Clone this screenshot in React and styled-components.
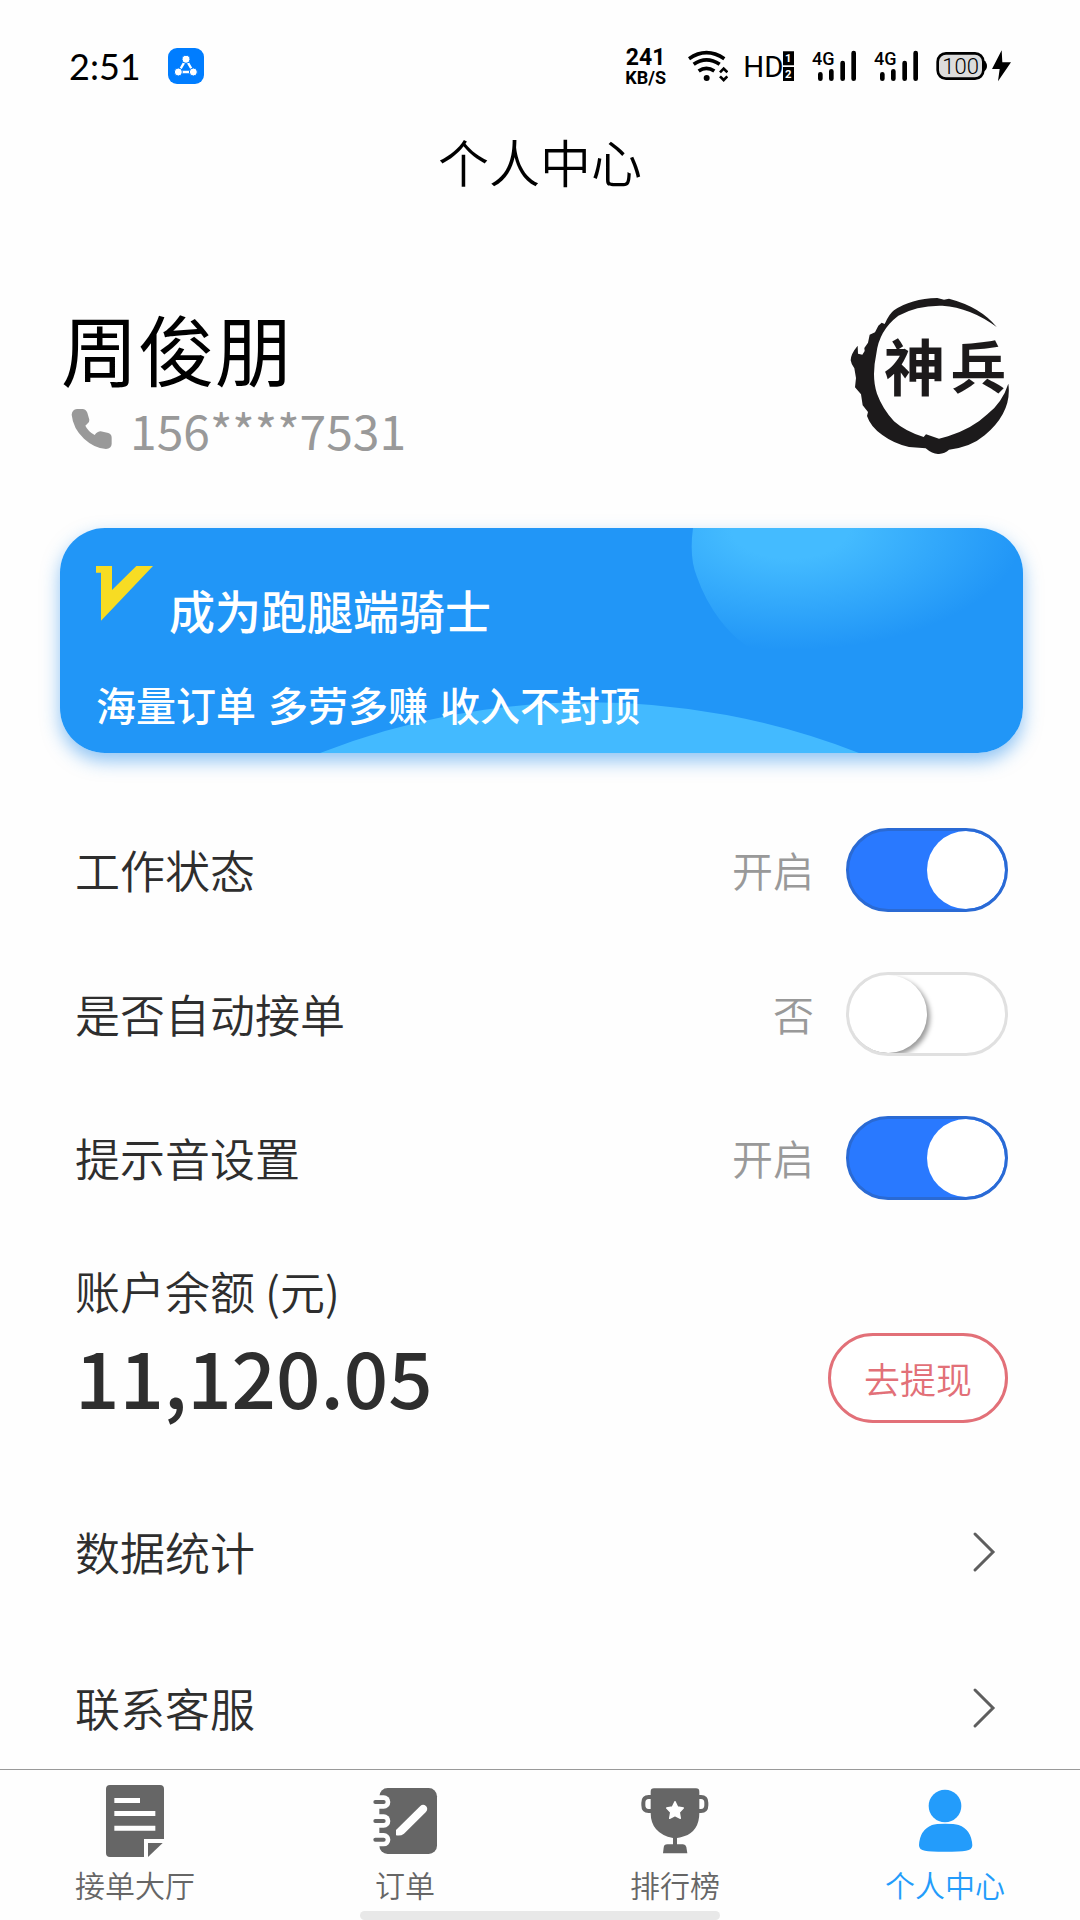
import React, { useState } from 'react';
import styled, { createGlobalStyle } from 'styled-components';

const GlobalStyle = createGlobalStyle`
  * {
    box-sizing: border-box;
  }
  body {
    margin: 0;
    background-color: #fefefe;
    color: #2e2e2e;
    font-family: 'Noto Sans CJK SC', 'Noto Sans', sans-serif;
    font-weight: 350;
  }
  h1, h2, p, ul {
    margin: 0;
    padding: 0;
    font-weight: inherit;
  }
  a {
    color: inherit;
    text-decoration: none;
  }
  svg {
    display: block;
    flex-shrink: 0;
  }
`;

const Page = styled.div`
  display: flex;
  flex-direction: column;
  min-height: 100vh;
`;

const StatusBar = styled.div`
  display: flex;
  align-items: center;
  justify-content: space-between;
  height: 132px;
  padding: 0 69px;
  color: #000;
`;

const StatusGroup = styled.div`
  display: flex;
  align-items: center;
  gap: ${({ $gap }) => $gap}px;
`;

const Clock = styled.time`
  font-family: Lato, sans-serif;
  font-size: 36px;
  font-weight: 400;
  line-height: 40px;
`;

const Speed = styled.div`
  margin-right: 5px;
  font-family: Roboto, sans-serif;
  font-weight: 700;
  font-size: 18px;
  line-height: 18px;
  text-align: center;
`;

const SpeedValue = styled.div`
  font-size: 23px;
  line-height: 23px;
`;

const Title = styled.h1`
  color: #000;
  font-size: 51px;
  line-height: 58px;
  text-align: center;
`;

const Profile = styled.section`
  display: flex;
  align-items: center;
  justify-content: space-between;
  padding: 105px 70px 71px 61px;
`;

const UserName = styled.h2`
  color: #000;
  font-size: 77px;
  font-weight: 400;
  line-height: 106px;
`;

const Phone = styled.p`
  display: flex;
  align-items: center;
  gap: 17px;
  padding-left: 10px;
  color: #999;
  font-size: 48px;
  font-weight: 400;
  line-height: 56px;
`;

const Banner = styled.a`
  position: relative;
  display: flex;
  flex-direction: column;
  gap: 22px;
  padding: 38px 36px 19px;
  overflow: hidden;
  border-radius: 45px;
  background-color: #2196f7;
  color: #fff;
  font-weight: 500;
`;

const BannerShadow = styled.div`
  margin: 0 57px 45px 60px;
  border-radius: 45px;
  box-shadow: 0 8px 18px rgba(33, 140, 235, 0.5);
`;

const BannerArt = styled.svg`
  position: absolute;
  inset: 0;
  width: 100%;
  height: 100%;
`;

const BannerHead = styled.div`
  position: relative;
  display: flex;
  gap: 16px;
`;

const BannerTitle = styled.div`
  font-size: 46px;
  line-height: 86px;
`;

const BannerText = styled.p`
  position: relative;
  display: flex;
  gap: 12px;
  font-size: 40px;
  line-height: 60px;
`;

const SettingRow = styled.label`
  display: flex;
  align-items: center;
  height: 144px;
  padding: 0 72px 0 75px;
`;

const SettingName = styled.span`
  padding-bottom: 2px;
  font-size: 45px;
`;

const SettingState = styled.span`
  margin-left: auto;
  margin-right: 32px;
  padding-bottom: 2px;
  color: #999;
  font-size: 41px;
`;

const Switch = styled.input`
  appearance: none;
  display: flex;
  width: 162px;
  height: 84px;
  margin: 0;
  border: 3px solid #e0e0e0;
  border-radius: 42px;
  background-color: #fff;
  overflow: hidden;

  &::before {
    content: '';
    width: 78px;
    height: 78px;
    border-radius: 50%;
    background-color: #fff;
    box-shadow: 3px 3px 5px rgba(0, 0, 0, 0.4);
  }

  &:checked {
    justify-content: flex-end;
    border-color: #2a6ad4;
    background-color: #2979ff;
  }

  &:checked::before {
    box-shadow: none;
  }
`;

const Balance = styled.section`
  padding: 31px 72px 0 75px;
`;

const BalanceLabel = styled.h2`
  font-size: 45px;
  line-height: 60px;
`;

const BalanceRow = styled.div`
  display: flex;
  align-items: center;
  justify-content: space-between;
`;

const Amount = styled.p`
  padding-bottom: 6px;
  font-size: 78px;
  font-weight: 500;
  line-height: 108px;
`;

const WithdrawButton = styled.button`
  width: 180px;
  height: 90px;
  padding: 0;
  border: 3px solid #e27078;
  border-radius: 45px;
  background-color: #fff;
  color: #e27078;
  font-family: inherit;
  font-size: 36px;
  font-weight: inherit;
`;

const LinkList = styled.nav`
  display: flex;
  flex-direction: column;
  gap: 96px;
  padding: 87px 84px 31px 75px;
`;

const LinkRow = styled.a`
  display: flex;
  align-items: center;
  justify-content: space-between;
  font-size: 45px;
  line-height: 60px;
`;

const TabBar = styled.nav`
  margin-top: auto;
  padding-top: 15px;
  border-top: 1px solid #999;
`;

const TabList = styled.ul`
  display: grid;
  grid-template-columns: repeat(4, 1fr);
  list-style: none;
`;

const TabLink = styled.a`
  display: flex;
  flex-direction: column;
  align-items: center;
  gap: 7px;
  color: ${({ $active }) => ($active ? '#239cfb' : '#666')};
  font-size: 30px;
  line-height: 40px;
`;

const HomeBar = styled.div`
  width: 33.33%;
  height: 9px;
  margin: 7px auto 0;
  border-radius: 5px;
  background-color: #e8e8e8;
`;

const AppIcon = () => (
  <svg width="36" height="36" viewBox="0 0 108 108" aria-hidden="true">
    <rect width="108" height="108" rx="27" fill="#007dff" />
    <path d="M54 34 32 72h44Z" fill="none" stroke="#fff" strokeWidth="7" />
    <g fill="#fff" stroke="#007dff" strokeWidth="3">
      <circle cx="54" cy="34" r="12" />
      <circle cx="31" cy="72" r="12" />
      <circle cx="76" cy="72" r="12" />
    </g>
  </svg>
);

const WifiIcon = () => (
  <svg width="40" height="32" viewBox="268 60 120 96" aria-hidden="true">
    <g fill="none" stroke="#000" strokeWidth="11">
      <path d="M271 86Q323 50 377 86" />
      <path d="M285 103Q323 76 363 103" />
      <path d="M300 123Q323 107 347 123" />
    </g>
    <circle cx="324" cy="144" r="9" />
    <path d="m364 127 11-11 11 11M364 139l11 11 11-11" fill="none" stroke="#000" strokeWidth="8" />
  </svg>
);

const HdIcon = () => (
  <svg width="50" height="36" viewBox="432 54 150 108" aria-hidden="true">
    <text x="427" y="140" fontSize="88" fontWeight="400" fontFamily="Roboto, sans-serif">HD</text>
    <path d="M546 64h33v42h-33ZM546 111h33v42h-33Z" />
    <g fill="#fff" fontSize="34" fontWeight="700" fontFamily="Roboto, sans-serif" textAnchor="middle">
      <text x="562" y="97">1</text>
      <text x="562" y="144">2</text>
    </g>
  </svg>
);

const SignalIcon = () => (
  <svg width="45" height="40" viewBox="633 48 135 120" aria-hidden="true">
    <text x="633" y="106" fontSize="54" fontWeight="500" fontFamily="Roboto, sans-serif">4G</text>
    <g strokeWidth="14" strokeLinecap="round" stroke="#000">
      <path d="M658 133v13M691 124v22M725 99v47M758 69v77" />
    </g>
  </svg>
);

const BatteryIcon = () => (
  <svg width="75" height="32" viewBox="1007 60 225 96" aria-hidden="true">
    <rect x="1012" y="70" width="137" height="76" rx="25" fill="#dcdcdc" stroke="#000" strokeWidth="8" />
    <path d="M1150 91q10 6 10 17t-10 17Z" />
    <text x="1081" y="131" fontSize="66" textAnchor="middle" fontFamily="Roboto, sans-serif" fontWeight="300">100</text>
    <path d="M1204 61 1175 117h23l-5 37 39-57h-26Z" />
  </svg>
);

const PhoneIcon = () => (
  <svg width="42" height="42" viewBox="92 381 126 126" fill="#999" aria-hidden="true">
    <path d="M94 401Q95 386 110 384L126 384Q137 385 141 395L147 416Q148 423 141 428L135 434Q143 451 163 462Q171 451 181 451L204 456Q214 460 214 470V489Q213 503 197 504Q161 501 131 473Q98 442 94 401Z" />
  </svg>
);

const Avatar = () => (
  <svg width="160" height="158" viewBox="58 50 480 474" role="img" aria-label="神兵">
    <path
      fill="#1c1a1b"
      d="M498 140Q450 80 355 55L340 58 320 53Q240 55 190 90Q176 100 162 131L153 127 143 136 133 156 117 163 112 187 101 203 102 212 95 223 82 220 81 196Q60 221 60 240Q62 253 71 264L76 293 73 321 91 342 96 375 112 395 109 407Q120 440 155 464Q190 490 235 500L285 504Q307 523 325 521Q343 519 355 508Q420 501 462 465Q545 395 533 310Q515 366 470 402Q425 445 352 468L325 475 286 462 279 470Q225 454 190 423Q155 384 139 340Q122 290 137 220Q145 150 203 106Q260 74 335 76Q420 82 498 140Z"
    />
    <g fill="#1c1a1b" fontFamily="Noto Sans CJK SC, sans-serif" fontWeight="700">
      <text x="160" y="332" fontSize="184">神</text>
      <text x="360" y="324" fontSize="166">兵</text>
    </g>
  </svg>
);

const VipIcon = () => (
  <svg width="57" height="55" viewBox="165 168 171 165" aria-hidden="true">
    <path d="M165 168h48v72l73-72h50L180 332V188h-15Z" fill="#f7dc23" />
  </svg>
);

const Chevron = () => (
  <svg width="24" height="42" viewBox="0 0 24 42" aria-hidden="true">
    <path d="M3 3 21 21 3 39" fill="none" stroke="#5e5e5e" strokeWidth="3" strokeLinecap="round" />
  </svg>
);

const HallIcon = () => (
  <svg width="72" height="72" viewBox="177 105 216 216" fill="#666" aria-hidden="true">
    <path d="M210 105h150q12 0 12 12v150h-60v54H210q-12 0-12-12V117q0-12 12-12Z" />
    <path d="M324 279h44l-44 42Z" />
    <path d="M223 144h77v15h-77ZM223 183h123v15H223ZM223 227h123v15H223Z" fill="#fff" />
  </svg>
);

const OrderIcon = () => (
  <svg width="72" height="72" viewBox="987 105 216 216" aria-hidden="true">
    <rect x="1018" y="114" width="173" height="198" rx="25" fill="#666" />
    {[156, 213, 269].map((y) => (
      <g key={y} strokeLinecap="round">
        <path d={`M1000 ${y}h31`} stroke="#fefefe" strokeWidth="40" />
        <path d={`M1006 ${y}h25`} stroke="#666" strokeWidth="12" />
      </g>
    ))}
    <path d="M1068 256V240L1141 168Q1149 160 1158 168Q1166 177 1157 187L1092 251Q1082 259 1068 256Z" fill="#fff" />
  </svg>
);

const RankIcon = () => (
  <svg width="72" height="72" viewBox="177 105 216 216" fill="#666" aria-hidden="true">
    <path d="M218 141h-12q-16 0-16 17v8q0 17 16 17h12M351 141h12q16 0 16 17v8q0 17-16 17h-12" fill="none" stroke="#666" strokeWidth="12" />
    <path d="M222 115h126q10 0 10 10v63q0 55-46 71-14 5-21 5v19h18q8 0 10 8l3 19H249l2-17q1-10 11-10h17v-19q-67-14-67-76v-63q0-10 10-10Z" />
    <path d="m285 155 8 16 17 3-12 13 3 18-16-8-16 8 3-18-12-13 17-3Z" fill="#fff" stroke="#fff" strokeWidth="4" strokeLinejoin="round" />
  </svg>
);

const UserIcon = () => (
  <svg width="72" height="72" viewBox="987 105 216 216" fill="#239cfb" aria-hidden="true">
    <circle cx="1095" cy="168" r="49" />
    <path d="M1017 286Q1019 240 1056 225Q1068 221 1095 221Q1124 221 1136 225Q1174 238 1177 286Q1177 301 1158 302Q1140 305 1095 305Q1050 305 1035 302Q1017 300 1017 286Z" />
  </svg>
);

const initialSettings = [
  { id: 'work', label: '工作状态', on: '开启', off: '关闭', checked: true },
  { id: 'auto', label: '是否自动接单', on: '是', off: '否', checked: false },
  { id: 'sound', label: '提示音设置', on: '开启', off: '关闭', checked: true },
];

const links = [
  { to: '#stats', label: '数据统计' },
  { to: '#service', label: '联系客服' },
];

const tabs = [
  { to: '#hall', label: '接单大厅', Icon: HallIcon },
  { to: '#orders', label: '订单', Icon: OrderIcon },
  { to: '#rank', label: '排行榜', Icon: RankIcon },
  { to: '#me', label: '个人中心', Icon: UserIcon, active: true },
];

const App = () => {
  const [settings, setSettings] = useState(initialSettings);

  const toggle = (id) => {
    setSettings(settings.map((s) => (s.id === id ? { ...s, checked: !s.checked } : s)));
  };

  return (
    <Page>
      <GlobalStyle />
      <StatusBar>
        <StatusGroup $gap={27}>
          <Clock>2:51</Clock>
          <AppIcon />
        </StatusGroup>
        <StatusGroup $gap={17}>
          <Speed>
            <SpeedValue>241</SpeedValue>
            KB/S
          </Speed>
          <WifiIcon />
          <HdIcon />
          <SignalIcon />
          <SignalIcon />
          <BatteryIcon />
        </StatusGroup>
      </StatusBar>
      <Title>个人中心</Title>

      <main>
        <Profile>
          <div>
            <UserName>周俊朋</UserName>
            <Phone>
              <PhoneIcon />
              156****7531
            </Phone>
          </div>
          <Avatar />
        </Profile>

        <BannerShadow>
          <Banner href="#join">
            <BannerArt viewBox="0 0 963 225" preserveAspectRatio="none" aria-hidden="true">
              <defs>
                <radialGradient
                  id="glow"
                  gradientUnits="userSpaceOnUse"
                  cx="0"
                  cy="0"
                  r="1"
                  gradientTransform="translate(730 0) scale(235 122)"
                >
                  <stop offset="0.25" stopColor="#44bbff" />
                  <stop offset="1" stopColor="#44bbff" stopOpacity="0" />
                </radialGradient>
              </defs>
              <path d="M633 0Q629 30 637 49Q645 72 660 92Q680 118 707 129H963V0Z" fill="url(#glow)" />
              <path d="M260 225A740 740 0 0 1 799 225Z" fill="#43baff" />
            </BannerArt>
            <BannerHead>
              <VipIcon />
              <BannerTitle>成为跑腿端骑士</BannerTitle>
            </BannerHead>
            <BannerText>
              <span>海量订单</span>
              <span>多劳多赚</span>
              <span>收入不封顶</span>
            </BannerText>
          </Banner>
        </BannerShadow>

        {settings.map((item) => (
          <SettingRow key={item.id} htmlFor={item.id}>
            <SettingName>{item.label}</SettingName>
            <SettingState>{item.checked ? item.on : item.off}</SettingState>
            <Switch id={item.id} type="checkbox" checked={item.checked} onChange={() => toggle(item.id)} />
          </SettingRow>
        ))}

        <Balance>
          <BalanceLabel>账户余额 (元)</BalanceLabel>
          <BalanceRow>
            <Amount>11,120.05</Amount>
            <WithdrawButton type="button">去提现</WithdrawButton>
          </BalanceRow>
        </Balance>

        <LinkList>
          {links.map((link) => (
            <LinkRow key={link.to} href={link.to}>
              {link.label}
              <Chevron />
            </LinkRow>
          ))}
        </LinkList>
      </main>

      <TabBar>
        <TabList>
          {tabs.map(({ to, label, Icon, active }) => (
            <li key={to}>
              <TabLink href={to} $active={active}>
                <Icon />
                {label}
              </TabLink>
            </li>
          ))}
        </TabList>
        <HomeBar />
      </TabBar>
    </Page>
  );
};

export default App;
